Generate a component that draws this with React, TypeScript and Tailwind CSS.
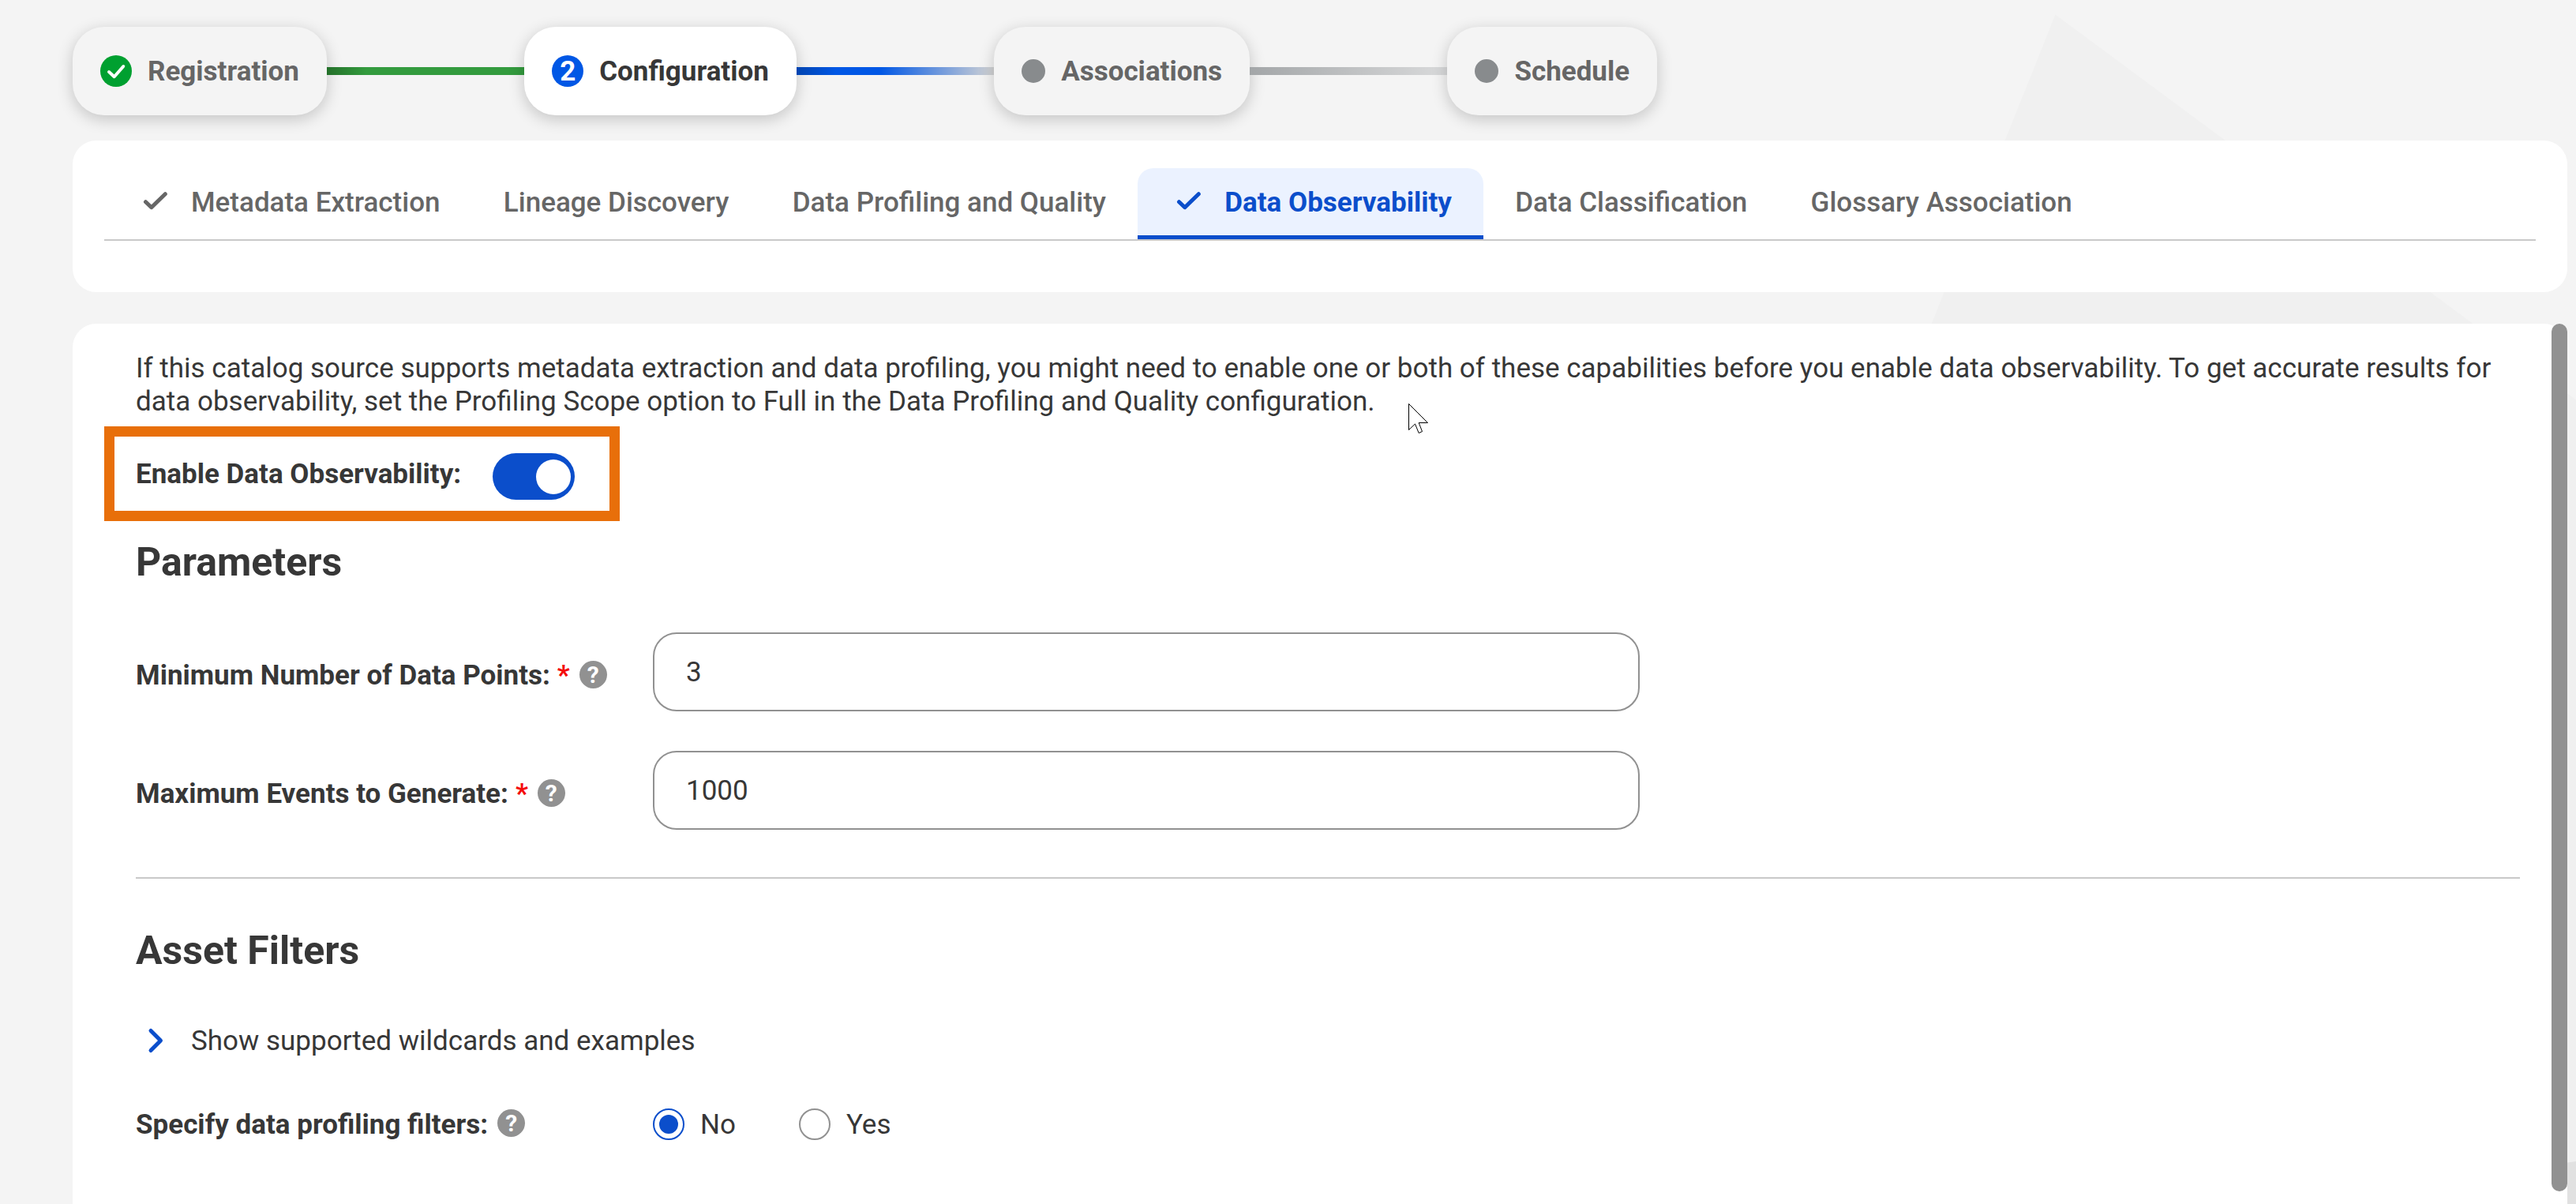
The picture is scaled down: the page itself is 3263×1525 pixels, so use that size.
import { useState } from 'react';
import clsx from 'clsx';

type StepState = 'done' | 'active' | 'todo';

const STEPS: { label: string; state: StepState; line?: string }[] = [
  { label: 'Registration', state: 'done', line: 'bg-[linear-gradient(90deg,#24702a_0%,#339b3e_20%,#339b3e_100%)]' },
  { label: 'Configuration', state: 'active', line: 'bg-[linear-gradient(90deg,#0044b0_0%,#0057e5_20%,#0057e5_42%,#d4d4d4_100%)]' },
  { label: 'Associations', state: 'todo', line: 'bg-[linear-gradient(90deg,#a3a6a8_0%,#d9dadb_100%)]' },
  { label: 'Schedule', state: 'todo' },
];

const TABS = [
  { label: 'Metadata Extraction', checked: true },
  { label: 'Lineage Discovery', checked: false },
  { label: 'Data Profiling and Quality', checked: false },
  { label: 'Data Observability', checked: true },
  { label: 'Data Classification', checked: false },
  { label: 'Glossary Association', checked: false },
];

function CheckIcon({ className }: { className?: string }) {
  return (
    <svg viewBox="0 0 50 50" className={className} fill="none" stroke="currentColor" strokeWidth="5" strokeLinecap="round" strokeLinejoin="round">
      <path d="M12.5 24.7 L19.8 31.7 L37.3 14.7" />
    </svg>
  );
}

function HelpIcon() {
  return (
    <span className="flex size-[35px] items-center justify-center rounded-full bg-[#919191] text-[30px] leading-none font-bold text-white">
      ?
    </span>
  );
}

function StepMarker({ state }: { state: StepState }) {
  if (state === 'done') {
    return (
      <span className="flex size-10 items-center justify-center rounded-full bg-[#00a030] text-white">
        <svg viewBox="0 0 40 40" className="size-10" fill="none" stroke="currentColor" strokeWidth="4" strokeLinecap="round" strokeLinejoin="round">
          <path d="M11 21 L17.7 27.2 L29.3 14" />
        </svg>
      </span>
    );
  }
  if (state === 'active') {
    return (
      <span className="flex size-10 items-center justify-center rounded-full bg-[#0057e5] text-[35px] leading-none font-bold text-white">2</span>
    );
  }
  return <span className="size-[30px] rounded-full bg-[#888b8d]" />;
}

function Stepper() {
  return (
    <div className="flex items-center">
      {STEPS.map(step => (
        <div key={step.label} className="flex items-center">
          <div
            className={clsx(
              'flex h-28 items-center gap-5 rounded-[40px] px-[35px] font-bold shadow-[0_5px_20px_rgba(0,0,0,0.2)]',
              step.state === 'active' ? 'bg-white text-[#373737]' : 'bg-[#f4f4f4] text-[#666]',
            )}
          >
            <StepMarker state={step.state} />
            <span className="pt-0.5">{step.label}</span>
          </div>
          {step.line && <div className={clsx('h-2.5 w-[250.3px]', step.line)} />}
        </div>
      ))}
    </div>
  );
}

function FieldRow({ label, value, onChange }: { label: string; value: string; onChange: (v: string) => void }) {
  return (
    <div className="flex h-[100px] items-center">
      <div className="flex w-[655px] items-center pt-[7px]">
        <span className="pt-[3px] font-bold">{label}</span>
        <span className="ml-[9px] pt-[3px] font-bold text-[#f40b0b]">*</span>
        <span className="ml-3">
          <HelpIcon />
        </span>
      </div>
      <input
        value={value}
        onChange={e => onChange(e.target.value)}
        className="h-[100px] w-[1250px] rounded-[30px] border-2 border-[#919191] bg-white px-10 text-[35px]"
      />
    </div>
  );
}

function Radio({ label, checked, onSelect }: { label: string; checked: boolean; onSelect: () => void }) {
  return (
    <button type="button" onClick={onSelect} className="flex items-center gap-5">
      <span
        className={clsx(
          'flex size-10 items-center justify-center rounded-full border-2',
          checked ? 'border-[#0b4ecb]' : 'border-[#919191]',
        )}
      >
        {checked && <span className="size-6 rounded-full bg-[#0b4ecb]" />}
      </span>
      <span className="pt-0.5">{label}</span>
    </button>
  );
}

export default function App() {
  const [activeTab, setActiveTab] = useState('Data Observability');
  const [enabled, setEnabled] = useState(true);
  const [minPoints, setMinPoints] = useState('3');
  const [maxEvents, setMaxEvents] = useState('1000');
  const [useFilters, setUseFilters] = useState(false);

  return (
    <div className="relative isolate flex h-[1525px] w-[3263px] flex-col overflow-hidden bg-[#f4f4f4] pt-[34px] pr-[11px] pl-[92px] font-[Roboto,'Liberation_Sans',sans-serif] text-[35px] leading-[42px] text-[#373737]">
      {/* backdrop shape */}
      <svg viewBox="0 0 3263 1525" className="absolute inset-0 -z-10 h-full w-full">
        <path d="M2603.5 18.5 L3263 506.5 V1525 H2000 Z" fill="#f0f0f0" />
        <path d="M3200 1480 L3263 1471 V1525 H3200 Z" fill="#e1e1e1" />
      </svg>

      <Stepper />

      <div className="mt-8 h-48 shrink-0 rounded-[30px] bg-white px-10 pt-[35px]">
        <div className="flex gap-[0.3px] border-b-2 border-[#c9c9c9]">
          {TABS.map(tab => {
            const active = tab.label === activeTab;
            return (
              <button
                key={tab.label}
                type="button"
                onClick={() => setActiveTab(tab.label)}
                className={clsx(
                  'flex h-[90px] items-center gap-5 rounded-t-[20px] border-b-5 px-10 whitespace-nowrap',
                  active ? 'border-[#0b4ecb] bg-[#ebf2ff] font-bold text-[#0b4ecb]' : 'border-transparent font-medium text-[#666]',
                )}
              >
                {tab.checked && <CheckIcon className="size-[50px]" />}
                <span className="pt-0.5">{tab.label}</span>
              </button>
            );
          })}
        </div>
      </div>

      <div className="mt-10 flex min-h-0 flex-1 rounded-t-[30px] bg-white">
        <div className="min-w-0 flex-1 pt-9 pl-20">
          <p className="w-[3000px]">
            If this catalog source supports metadata extraction and data profiling, you might need to enable one or both of these
            capabilities before you enable data observability. To get accurate results for data observability, set the Profiling Scope
            option to Full in the Data Profiling and Quality configuration.
          </p>

          <div className="mt-2.5 -ml-10 flex h-[120px] w-[653px] items-center border-[13px] border-[#e86f0a] pl-[27px]">
            <span className="mt-0.5 font-bold">Enable Data Observability:</span>
            <button
              type="button"
              role="switch"
              aria-checked={enabled}
              onClick={() => setEnabled(!enabled)}
              className={clsx(
                'mt-[7px] ml-10 flex h-[59px] w-[104px] items-center rounded-full px-[5px]',
                enabled ? 'justify-end bg-[#0b4ecb]' : 'justify-start bg-[#919191]',
              )}
            >
              <span className="size-11 rounded-full bg-white" />
            </button>
          </div>

          <h2 className="mt-[22px] text-[50px] leading-[60px] font-bold">Parameters</h2>

          <div className="mt-[59px] flex flex-col gap-[50px]">
            <FieldRow label="Minimum Number of Data Points:" value={minPoints} onChange={setMinPoints} />
            <FieldRow label="Maximum Events to Generate:" value={maxEvents} onChange={setMaxEvents} />
          </div>

          <hr className="mt-[60px] mr-10 border-t-2 border-[#c9c9c9]" />

          <h2 className="mt-[61px] text-[50px] leading-[60px] font-bold">Asset Filters</h2>

          <button type="button" className="mt-[59px] flex items-center">
            <svg viewBox="0 0 50 50" className="size-[50px]" fill="none" stroke="#0b4ecb" strokeWidth="5" strokeLinecap="round" strokeLinejoin="round">
              <path d="M19 12.5 L31.5 25 L19 37.5" />
            </svg>
            <span className="ml-5 pt-0.5">Show supported wildcards and examples</span>
          </button>

          <div className="mt-[59px] flex items-center">
            <div className="flex w-[655px] items-center">
              <span className="mr-3 pt-0.5 font-bold">Specify data profiling filters:</span>
              <span className="mb-[3px]">
                <HelpIcon />
              </span>
            </div>
            <div className="flex gap-20">
              <Radio label="No" checked={!useFilters} onSelect={() => setUseFilters(false)} />
              <Radio label="Yes" checked={useFilters} onSelect={() => setUseFilters(true)} />
            </div>
          </div>
        </div>

        {/* scrollbar */}
        <div className="w-5 shrink-0">
          <div className="h-[1099px] rounded-full bg-[#919191]" />
        </div>
      </div>

      {/* mouse pointer */}
      <svg viewBox="0 0 26 39" className="absolute top-[510px] left-[1783px] h-[39px] w-[26px]" fill="#fff" stroke="#000" strokeWidth="1">
        <path d="M1.5 1.5 V34.5 L9.5 27 L14.2 38.5 L18.5 36.5 L14.2 25.5 H25.5 Z" />
      </svg>
    </div>
  );
}
